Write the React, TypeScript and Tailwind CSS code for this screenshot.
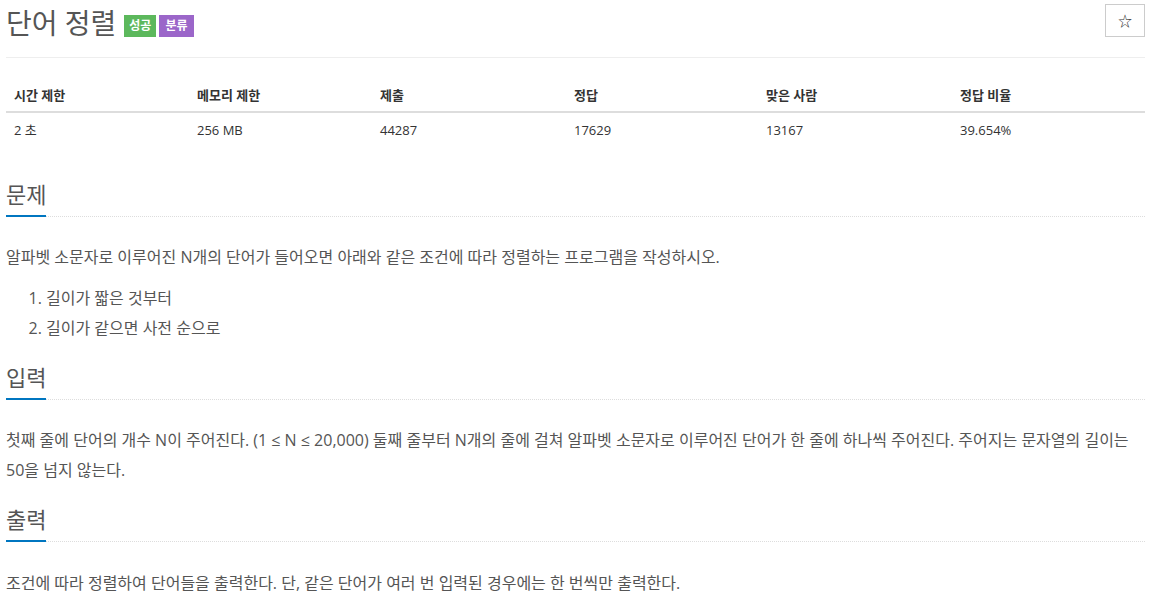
import React from 'react';

const font = "font-['Open_Sans','Noto_Sans_CJK_KR',sans-serif]";

const stats = [
  { label: '시간 제한', value: '2 초', w: 'w-[183px]' },
  { label: '메모리 제한', value: '256 MB', w: 'w-[183px]' },
  { label: '제출', value: '44287', w: 'w-[194px]' },
  { label: '정답', value: '17629', w: 'w-[192px]' },
  { label: '맞은 사람', value: '13167', w: 'w-[194px]' },
  { label: '정답 비율', value: '39.654%', w: '' },
];

const Headline: React.FC<{ title: string }> = ({ title }) => (
  <div className="flex border-b border-dotted border-[#ddd]">
    <h2 className="-mb-px border-b-2 border-[#0076c0] pb-[6px] text-[22px] leading-[30px] text-[#555]">{title}</h2>
  </div>
);

export default function App() {
  return (
    <div className={`${font} bg-white px-[6px] text-[#555]`}>
      <div className="flex items-start justify-between border-b border-[#eee] pb-[17px] pt-[4px]">
        <div className="flex items-center gap-[8px] pt-[2px]">
          <h1 className="text-[28px] leading-[34px] text-[#555]">단어 정렬</h1>
          <div className="mt-[6px] flex gap-[3px]">
            <span className="bg-[#5cb85c] px-[5px] py-[3px] text-[12px] font-bold leading-[16px] text-white">성공</span>
            <span className="bg-[#9b66c9] px-[6px] py-[3px] text-[12px] font-bold leading-[16px] text-white">분류</span>
          </div>
        </div>
        <button className="flex h-[33px] w-[40px] items-center justify-center border border-[#ccc] bg-white text-[14px] text-[#333]">
          ☆
        </button>
      </div>

      <table className="mt-[21px] w-full border-collapse text-[13px] text-[#333]">
        <thead>
          <tr className="border-b-2 border-[#ddd]">
            {stats.map((s) => (
              <th key={s.label} className={`${s.w} px-[8px] py-[6px] text-left font-bold leading-[20px]`}>
                {s.label}
              </th>
            ))}
          </tr>
        </thead>
        <tbody>
          <tr>
            {stats.map((s) => (
              <td key={s.label} className="px-[8px] py-[7px] text-left leading-[20px]">
                {s.value}
              </td>
            ))}
          </tr>
        </tbody>
      </table>

      <section className="mt-[32px]">
        <Headline title="문제" />
        <div className="pt-[25px] text-[16px] leading-[30px]">
          <p>알파벳 소문자로 이루어진 N개의 단어가 들어오면 아래와 같은 조건에 따라 정렬하는 프로그램을 작성하시오.</p>
          <ol className="mt-[11px] list-decimal pl-[40px]">
            <li>길이가 짧은 것부터</li>
            <li>길이가 같으면 사전 순으로</li>
          </ol>
        </div>
      </section>

      <section className="mt-[19px]">
        <Headline title="입력" />
        <p className="pt-[25px] text-[16px] leading-[30px]">
          첫째 줄에 단어의 개수 N이 주어진다. (1 ≤ N ≤ 20,000) 둘째 줄부터 N개의 줄에 걸쳐 알파벳 소문자로 이루어진 단어가 한 줄에 하나씩 주어진다. 주어지는 문자열의 길이는 50을 넘지 않는다.
        </p>
      </section>

      <section className="mt-[19px]">
        <Headline title="출력" />
        <p className="pt-[26px] text-[16px] leading-[30px]">
          조건에 따라 정렬하여 단어들을 출력한다. 단, 같은 단어가 여러 번 입력된 경우에는 한 번씩만 출력한다.
        </p>
      </section>
    </div>
  );
}
